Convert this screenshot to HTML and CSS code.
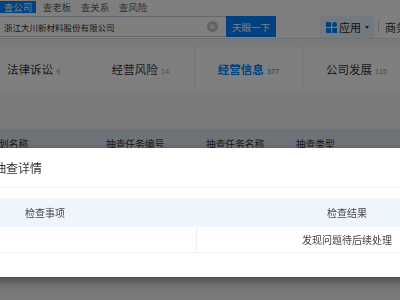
FILE: index.html
```html
<html lang="zh">
<head>
    <meta charset="UTF-8">
    <meta name="viewport" content="width=device-width, initial-scale=1.0">
    <title>经营信息 - 抽查检查</title>
    <link rel="stylesheet" href="styles.css">
</head>
<body>
    <div class="header">
        <div class="search">
            <div class="search-tabs">
                <span class="stab active">查公司</span>
                <span class="stab">查老板</span>
                <span class="stab">查关系</span>
                <span class="stab">查风险</span>
            </div>
            <div class="search-row">
                <div class="search-input">
                    <span class="search-text">浙江大川新材料股份有限公司</span>
                    <svg class="clear" width="11" height="11" viewBox="0 0 11 11">
                        <circle cx="5.5" cy="5.5" r="5.5" fill="#c4c4c4"/>
                        <path d="M3.4 3.4 L7.6 7.6 M7.6 3.4 L3.4 7.6" stroke="#fff" stroke-width="1.3"/>
                    </svg>
                </div>
                <button class="search-btn">天眼一下</button>
            </div>
        </div>
        <div class="app-btn">
            <svg width="11" height="11" viewBox="0 0 11 11">
                <rect x="0" y="0" width="5" height="5" fill="#0084ff"/>
                <circle cx="8.5" cy="2.5" r="2.5" fill="#0084ff"/>
                <rect x="0" y="6" width="5" height="5" fill="#0084ff"/>
                <rect x="6" y="6" width="5" height="5" fill="#0084ff"/>
            </svg>
            <span>应用</span>
            <span class="caret"></span>
        </div>
        <span class="divider"></span>
        <span class="biz">商务合作</span>
    </div>

    <div class="tabs">
        <div class="tab">法律诉讼<span class="num">9</span></div>
        <div class="tab">经营风险<span class="num">14</span></div>
        <div class="tab active">经营信息<span class="num">377</span></div>
        <div class="tab">公司发展<span class="num">115</span></div>
    </div>

    <table class="bg-table">
        <tr>
            <th class="c1">抽查计划名称</th>
            <th class="c2">抽查任务编号</th>
            <th class="c3">抽查任务名称</th>
            <th class="c4">抽查类型</th>
        </tr>
    </table>

    <div class="mask"></div>

    <div class="modal">
        <div class="modal-title">抽查详情</div>
        <div class="modal-body">
            <table class="detail">
                <tr>
                    <th class="first">检查事项</th>
                    <th>检查结果</th>
                </tr>
                <tr>
                    <td class="first"></td>
                    <td>发现问题待后续处理</td>
                </tr>
            </table>
        </div>
    </div>
</body>
</html>
```

FILE: styles.css
```css
body {
    margin: 0;
    background-color: #f5f5f5;
    font-family: "Noto Sans CJK SC", "Liberation Sans", sans-serif;
    color: #333;
    overflow: hidden;
    width: 400px;
    height: 300px;
}
.header {
    display: flex;
    align-items: flex-end;
    height: 38px;
    background: #fff;
    border-bottom: 1px solid #dfe4ea;
    white-space: nowrap;
}
.search {
    display: flex;
    flex-direction: column;
    width: 276px;
    flex-shrink: 0;
}
.search-tabs {
    display: flex;
    height: 12px;
    margin-bottom: 3px;
}
.stab {
    width: 38px;
    font-size: 9.5px;
    line-height: 12px;
    text-align: center;
    color: #666;
}
.stab.active {
    background: #0084ff;
    color: #fff;
    width: 36px;
    margin-right: 2px;
}
.search-row {
    display: flex;
    height: 21px;
    margin-left: -12px;
    margin-bottom: 1px;
}
.search-input {
    flex: 1;
    display: flex;
    align-items: center;
    border: 1px solid #c9d3de;
    border-right: none;
    padding-left: 15px;
    padding-right: 8px;
}
.search-text {
    flex: 1;
    font-size: 8.5px;
    color: #333;
}
.search-btn {
    width: 50px;
    border: none;
    margin: 0;
    padding: 0;
    background: #0084ff;
    color: #fff;
    font-family: "Noto Sans CJK SC", sans-serif;
    font-size: 9.5px;
}
.app-btn {
    display: flex;
    align-items: center;
    gap: 2px;
    height: 22px;
    margin-left: 44px;
    padding: 0 5px 0 6px;
    background: #e8f2fe;
    font-size: 11px;
    color: #222;
    flex-shrink: 0;
}
.caret {
    width: 0;
    height: 0;
    margin-left: 2px;
    border-left: 2.5px solid transparent;
    border-right: 2.5px solid transparent;
    border-top: 3px solid #333;
}
.divider {
    width: 1px;
    height: 11px;
    background: #ccc;
    margin: 0 6px 6px 4px;
    flex-shrink: 0;
}
.biz {
    font-size: 11px;
    color: #333;
    line-height: 22px;
}
.tabs {
    display: flex;
    margin-top: 8px;
    margin-left: -20px;
    height: 44px;
    background: #fff;
    white-space: nowrap;
}
.tab {
    flex: 0 0 107px;
    text-align: center;
    line-height: 44px;
    font-size: 11.5px;
    color: #333;
}
.tab .num {
    font-family: "Liberation Sans", sans-serif;
    font-size: 7.5px;
    color: #999;
    margin-left: 3px;
}
.tab.active {
    color: #0084ff;
    font-weight: bold;
    border-left: 1px solid #e8e8e8;
    border-right: 1px solid #e8e8e8;
}
.tab.active .num {
    color: #0084ff;
    font-weight: normal;
}
.bg-table {
    margin-top: 38px;
    margin-left: -36px;
    border-collapse: collapse;
    background: #dde7f1;
    width: 500px;
}
.bg-table th {
    height: 28px;
    font-size: 9.7px;
    font-weight: normal;
    text-align: left;
    color: #333;
    padding: 2px 0 0;
    white-space: nowrap;
}
.bg-table .c1 { width: 136px; padding-left: 6px; }
.bg-table .c2 { width: 100px; }
.bg-table .c3 { width: 90px; }
.mask {
    position: fixed;
    top: 0;
    left: 0;
    right: 0;
    bottom: 0;
    background: rgba(0, 0, 0, 0.5);
}
.modal {
    position: fixed;
    top: 148px;
    left: -30px;
    width: 551px;
    height: 129px;
    background: #fff;
    box-shadow: 0 4px 10px rgba(0, 0, 0, 0.45);
}
.modal-title {
    height: 39px;
    line-height: 40px;
    padding: 0 24px;
    font-size: 12px;
    color: #333;
    border-bottom: 1px solid #f3f3f3;
}
.modal-body {
    padding: 10px 24px 0;
}
.detail {
    width: 100%;
    border-collapse: collapse;
    font-size: 10px;
}
.detail th {
    height: 29px;
    background: #eef5fc;
    font-weight: normal;
    color: #444;
    text-align: center;
}
.detail td {
    height: 25px;
    color: #444;
    text-align: center;
    border-bottom: 1px solid #f0f0f0;
}
.detail .first {
    width: 170px;
    text-align: left;
    padding-left: 31px;
    border-right: 1px solid #eeeeee;
}
.detail th.first {
    border-right-color: #eef5fc;
}
```
